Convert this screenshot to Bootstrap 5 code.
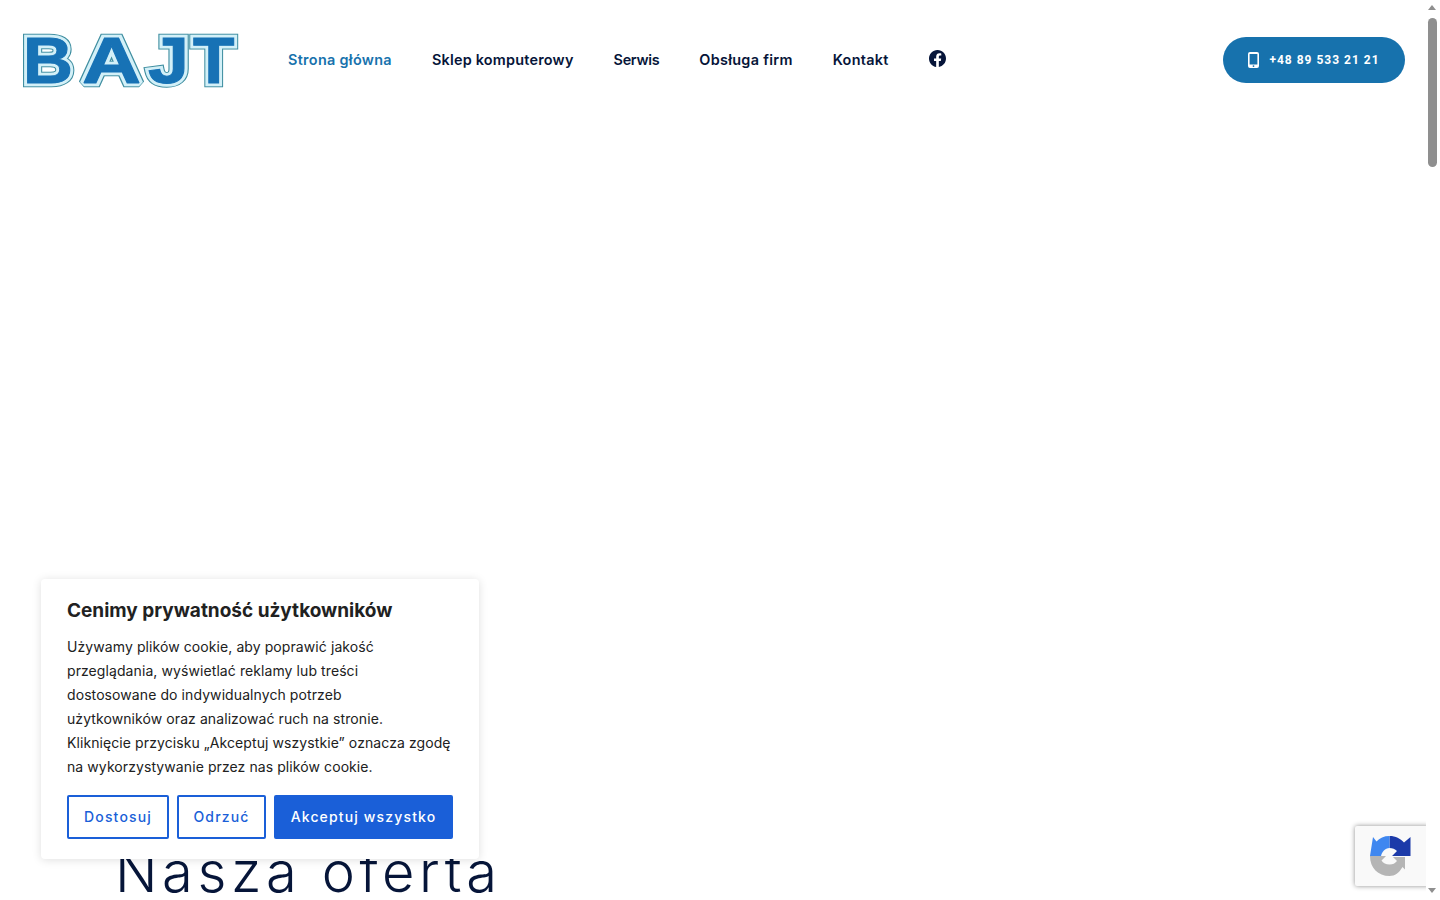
<!doctype html>
<html lang="pl"><head><meta charset="utf-8"><title>BAJT</title>
<link href="https://cdn.jsdelivr.net/npm/bootstrap@5.3.0/dist/css/bootstrap.min.css" rel="stylesheet">
<style>
html,body{height:900px;overflow:hidden;background:#fff}
body{font-family:"Inter","Liberation Sans",sans-serif;position:relative}
.site-head{height:120px;padding:0 35px 0 23px;width:1440px}
.logo-box{width:220px;height:84px;margin-right:45px}
.logo-box svg{display:block}
.logo-letters{font-family:"Liberation Sans",sans-serif;font-weight:700;font-size:64px;stroke-linejoin:miter;stroke-miterlimit:1.6}
.main-menu{gap:40px;font-size:14.4px;font-weight:600;letter-spacing:.23px}
.main-menu a{color:#061539;text-decoration:none;white-space:nowrap}
.main-menu a.on{color:#1772ad;letter-spacing:.32px}
.main-menu a:nth-child(3){letter-spacing:-.3px}
.main-menu a:nth-child(4){letter-spacing:.32px}
.main-menu a:nth-child(5){letter-spacing:.3px}
.fb-link{display:block;margin-top:-3px}
.fb-link svg{display:block}
.tel-btn{width:182px;height:46px;background:#1772ad;border-radius:23px;color:#fff;font:700 12px "Roboto",sans-serif;letter-spacing:1px;gap:10px;text-decoration:none}
.tel-btn:hover{color:#fff}
.offer-title{position:absolute;left:115px;top:844px;margin:0;font-family:"Inter",sans-serif;font-weight:300;font-size:56px;line-height:56px;letter-spacing:4.6px;color:#061539;white-space:nowrap}
.cookie-box{position:absolute;left:41px;top:579px;width:438px;height:280px;background:#fff;border-radius:4px;box-shadow:0 1px 10px rgba(0,0,0,.13);padding:20px 26px;color:#212121;z-index:5}
.cookie-box h2{font-family:"Inter",sans-serif;font-size:19px;font-weight:700;line-height:24px;margin:0 0 12px}
.cookie-box p{font-size:14px;line-height:24px;margin:0 0 16px;letter-spacing:.085px;white-space:nowrap}
.ck-btn{height:44px;border:2px solid #1a5fd8;border-radius:2px;font-size:14px;font-weight:500;letter-spacing:1.15px;color:#1a5fd8;background:#fff;padding:0 0 2px;--bs-btn-border-radius:2px}
.ck-a{width:102px}.ck-b{width:89px}.ck-c{width:179px;background:#1a5fd8;color:#fff}
.bar-rail{position:absolute;right:0;top:0;width:14px;height:900px;background:#fff;z-index:8}
.bar-thumb{position:absolute;left:2px;top:18px;width:9px;height:149px;border-radius:5px;background:#8f8f8f}
.bar-up,.bar-down{position:absolute;left:2px;width:0;height:0;border-left:4.5px solid transparent;border-right:4.5px solid transparent}
.bar-up{top:5px;border-bottom:5px solid #8f8f8f}
.bar-down{top:888px;border-top:5px solid #8f8f8f}
.rc-badge{position:absolute;left:1355px;top:826px;width:75px;height:60px;background:#f9f9f9;box-shadow:0 0 5px rgba(0,0,0,.45);border-radius:2px;z-index:6}
.rc-badge svg{display:block;margin:0 0 0 5px}
</style></head>
<body>
<header class="site-head d-flex align-items-center">
  <a class="logo-box d-block" href="#" aria-label="BAJT">
    <svg width="220" height="84" viewBox="0 0 220 84">
      <defs>
        <g id="bajt-word" class="logo-letters">
          <text transform="translate(0 65) scale(1.08 1)">B</text>
          <text transform="translate(59 65) scale(1.28 1)">A</text>
          <text transform="translate(125 65) scale(1.15 1)">J</text>
          <text transform="translate(170 65) scale(1.06 1)">T</text>
        </g>
      </defs>
      <use href="#bajt-word" fill="#3f8ea0" stroke="#3f8ea0" stroke-width="8.5"/>
      <use href="#bajt-word" fill="#d3f0f8" stroke="#d3f0f8" stroke-width="6.5"/>
      <use href="#bajt-word" fill="#1772b5" stroke="#1772b5" stroke-width="1"/>
    </svg>
  </a>
  <nav class="main-menu d-flex align-items-center">
    <a class="on" href="#">Strona główna</a>
    <a href="#">Sklep komputerowy</a>
    <a href="#">Serwis</a>
    <a href="#">Obsługa firm</a>
    <a href="#">Kontakt</a>
    <a class="fb-link" href="#" aria-label="Facebook"><svg width="17" height="17" viewBox="0 0 16 16" fill="#061539"><path d="M16 8.049c0-4.446-3.582-8.05-8-8.05C3.58 0-.002 3.603-.002 8.05c0 4.017 2.926 7.347 6.75 7.951v-5.625h-2.03V8.05H6.75V6.275c0-2.017 1.195-3.131 3.022-3.131.876 0 1.791.157 1.791.157v1.98h-1.009c-.993 0-1.303.621-1.303 1.258v1.51h2.218l-.354 2.326H9.25V16c3.824-.604 6.75-3.934 6.75-7.951"/></svg></a>
  </nav>
  <a class="tel-btn d-flex align-items-center justify-content-center ms-auto" href="#">
    <svg width="11" height="16" viewBox="0 0 11 16"><path fill="#fff" fill-rule="evenodd" d="M2 0h7a2 2 0 0 1 2 2v12a2 2 0 0 1-2 2H2a2 2 0 0 1-2-2V2a2 2 0 0 1 2-2Zm-.4 2v10.4h7.8V2ZM5.5 13.2a.9.9 0 1 0 0 1.8.9.9 0 0 0 0-1.8Z"/></svg>
    <span>+48 89 533 21 21</span>
  </a>
</header>
<h1 class="offer-title">Nasza oferta</h1>
<section class="cookie-box">
  <h2>Cenimy prywatność użytkowników</h2>
  <p>Używamy plików cookie, aby poprawić jakość<br>przeglądania, wyświetlać reklamy lub treści<br>dostosowane do indywidualnych potrzeb<br>użytkowników oraz analizować ruch na stronie.<br>Kliknięcie przycisku „Akceptuj wszystkie” oznacza zgodę<br>na wykorzystywanie przez nas plików cookie.</p>
  <div class="d-flex gap-2">
    <button class="btn ck-btn ck-a" type="button">Dostosuj</button>
    <button class="btn ck-btn ck-b" type="button">Odrzuć</button>
    <button class="btn ck-btn ck-c" type="button">Akceptuj wszystko</button>
  </div>
</section>
<div class="rc-badge" aria-hidden="true">
  <svg width="60" height="60" viewBox="0 0 60 60">
    <path fill="#b5b5b5" d="M10 30H26L21.5 34.5C23 37 26 38.5 29.5 38.5C33 38.5 35 37.5 37 35L33 31H45V43.5L42.5 41C39 47 35 50 29.5 50C18 50 10 42 10 30Z"/>
    <path fill="#1c3aa9" d="M29.5 10C36 10 40 12.5 44 16.5L50.5 11V30H32L37 25C35 23 32.5 22 29.5 22Z"/>
    <path fill="#3f87f0" d="M29.5 10C24 10 19.5 12 16.5 15.5L13 11L10 30H21C22 26 25 22 29.5 22Z"/>
  </svg>
</div>
<div class="bar-rail" aria-hidden="true"><div class="bar-up"></div><div class="bar-thumb"></div><div class="bar-down"></div></div>
</body></html>
